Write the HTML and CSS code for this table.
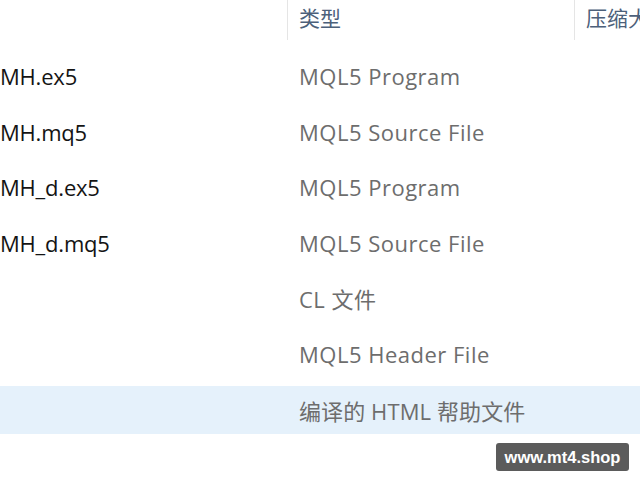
FILE: index.html
```html
<!DOCTYPE html>
<html>
<head>
<meta charset="utf-8">
<link rel="stylesheet" href="styles.css">
</head>
<body>
<div class="explorer">
  <div class="header">
    <div class="hcell hname"></div>
    <div class="hcell htype">类型</div>
    <div class="hcell hsize">压缩大小</div>
  </div>
  <div class="list">
    <div class="row"><span class="name">MH.ex5</span><span class="type">MQL5 Program</span></div>
    <div class="row"><span class="name">MH.mq5</span><span class="type">MQL5 Source File</span></div>
    <div class="row"><span class="name">MH_d.ex5</span><span class="type">MQL5 Program</span></div>
    <div class="row"><span class="name">MH_d.mq5</span><span class="type">MQL5 Source File</span></div>
    <div class="row"><span class="name"></span><span class="type">CL 文件</span></div>
    <div class="row"><span class="name"></span><span class="type">MQL5 Header File</span></div>
    <div class="row selected"><span class="name"></span><span class="type cjk">编译的 HTML 帮助文件</span></div>
  </div>
  <div class="watermark">www.mt4.shop</div>
</div>
</body>
</html>
```
FILE: styles.css
```css
html, body {
  margin: 0;
  padding: 0;
  background: #ffffff;
}
.explorer {
  position: relative;
  width: 640px;
  height: 480px;
  overflow: hidden;
  font-family: "Open Sans", "Noto Sans CJK SC", sans-serif;
}
.header {
  display: grid;
  grid-template-columns: 287px 287px 66px;
  height: 40px;
}
.hcell {
  font-size: 21px;
  color: #4c607a;
  line-height: 36px;
  white-space: nowrap;
  overflow: hidden;
  padding-left: 11px;
}
.htype, .hsize {
  border-left: 1px solid #e5e5e5;
}
.hname { padding-left: 0; }
.list {
  display: flex;
  flex-direction: column;
  gap: 6.5px;
  padding-top: 11.5px;
}
.row {
  display: grid;
  grid-template-columns: 299px 1fr;
  align-items: center;
  height: 49px;
  font-size: 22px;
}
.row.selected {
  background: #e5f1fb;
  margin-top: 1px;
  height: 48px;
}
.name {
  color: #141414;
  white-space: nowrap;
  letter-spacing: -0.2px;
}
.type {
  color: #6d6d6d;
  white-space: nowrap;
  letter-spacing: 0.5px;
}
.type.cjk {
  letter-spacing: 0.1px;
}
.watermark {
  position: absolute;
  left: 496px;
  top: 443px;
  width: 133px;
  height: 28px;
  border-radius: 3px;
  background: #5b5b5b;
  color: #ffffff;
  font-family: "Liberation Sans", Arial, sans-serif;
  font-weight: bold;
  font-size: 16.5px;
  line-height: 28px;
  text-align: center;
}
```
